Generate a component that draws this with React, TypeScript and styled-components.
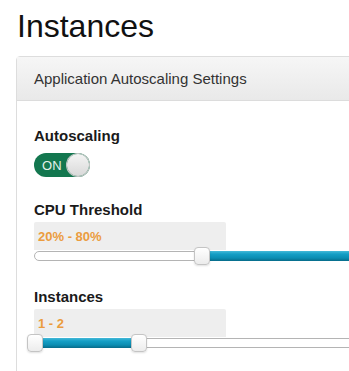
import React from 'react';
import styled, { createGlobalStyle } from 'styled-components';

const GlobalStyle = createGlobalStyle`
  html, body {
    margin: 0;
    padding: 0;
    background: #fff;
    overflow: hidden;
  }
  body {
    font-family: "Liberation Sans", Arial, sans-serif;
    color: #222;
  }
`;

const Page = styled.div`
  width: 349px;
  height: 371px;
  overflow: hidden;
  padding: 9px 0 0 16px;
  box-sizing: border-box;
`;

const Title = styled.h1`
  margin: 0 0 12px 1px;
  font-size: 32px;
  font-weight: 400;
  line-height: 35px;
  color: #111;
`;

const Panel = styled.div`
  width: 870px;
  border: 1px solid #ddd;
  border-radius: 4px 4px 0 0;
  background: #fff;
`;

const PanelHeader = styled.div`
  height: 43px;
  display: flex;
  align-items: center;
  padding: 0 17px;
  background: linear-gradient(to bottom, #f6f6f6, #e9e9e9);
  border-bottom: 1px solid #dcdcdc;
  font-size: 15px;
  color: #333;
`;

const PanelBody = styled.div`
  padding: 25px 17px 40px;
  display: flex;
  flex-direction: column;
`;

const Field = styled.div<{ $gap?: number }>`
  display: flex;
  flex-direction: column;
  margin-bottom: ${(p) => p.$gap ?? 22}px;
`;

const Label = styled.label`
  font-size: 15px;
  line-height: 20px;
  font-weight: 700;
  color: #1a1a1a;
`;

const Toggle = styled.div`
  margin-top: 7px;
  width: 56px;
  height: 24px;
  border-radius: 12px;
  background: #13774f;
  display: flex;
  align-items: center;
  justify-content: space-between;
  padding: 0 1px 0 8px;
  box-sizing: border-box;
`;

const ToggleText = styled.span`
  font-size: 13px;
  color: #e4f2ec;
  letter-spacing: 0.2px;
`;

const Knob = styled.span`
  width: 22px;
  height: 22px;
  border-radius: 50%;
  background: linear-gradient(to bottom, #f4f4f4, #d9d9d9);
  box-shadow: 0 0 0 1px #c8c8c8;
`;

const ValueBox = styled.div`
  margin-top: 2px;
  width: 192px;
  height: 28px;
  background: #eee;
  border-radius: 2px 2px 0 0;
  display: flex;
  align-items: center;
  padding-left: 4px;
  box-sizing: border-box;
  font-size: 13px;
  font-weight: 700;
  color: #eb9c3e;
`;

const Slider = styled.div`
  position: relative;
  margin-top: -3px;
  height: 18px;
  display: flex;
  align-items: center;
`;

const Track = styled.div`
  position: relative;
  flex: 1;
  height: 10px;
  background: #fff;
  border: 1px solid #b4b4b4;
  border-radius: 6px;
  box-sizing: border-box;
`;

const Fill = styled.div`
  position: absolute;
  top: -1px;
  bottom: -1px;
  background: linear-gradient(to bottom, #45b9d8 0%, #159fc6 30%, #0b8db2 70%, #076b89 100%);
`;

const Handle = styled.div`
  position: absolute;
  top: -5px;
  width: 16px;
  height: 18px;
  margin-left: -8px;
  box-sizing: border-box;
  border: 1px solid #c4c4c4;
  border-radius: 4px;
  background: linear-gradient(to bottom, #ffffff, #ececec);
  box-shadow: 0 1px 2px rgba(0, 0, 0, 0.12);
`;

interface RangeProps {
  min: number;
  max: number;
  low: number;
  high: number;
}

const RangeSlider: React.FC<RangeProps> = ({ min, max, low, high }) => {
  const pct = (v: number) => ((v - min) / (max - min)) * 100;
  const a = pct(low);
  const b = pct(high);
  return (
    <Slider>
      <Track>
        <Fill style={{ left: `${a}%`, width: `${b - a}%` }} />
        <Handle style={{ left: `${a}%` }} />
        <Handle style={{ left: `${b}%` }} />
      </Track>
    </Slider>
  );
};

export default function App() {
  return (
    <>
      <GlobalStyle />
      <Page>
        <Title>Instances</Title>
        <Panel>
          <PanelHeader>Application Autoscaling Settings</PanelHeader>
          <PanelBody>
            <Field $gap={23}>
              <Label>Autoscaling</Label>
              <Toggle>
                <ToggleText>ON</ToggleText>
                <Knob />
              </Toggle>
            </Field>
            <Field>
              <Label>CPU Threshold</Label>
              <ValueBox>20% - 80%</ValueBox>
              <RangeSlider min={0} max={100} low={20} high={80} />
            </Field>
            <Field>
              <Label>Instances</Label>
              <ValueBox>1 - 2</ValueBox>
              <RangeSlider min={1} max={9} low={1} high={2} />
            </Field>
          </PanelBody>
        </Panel>
      </Page>
    </>
  );
}
